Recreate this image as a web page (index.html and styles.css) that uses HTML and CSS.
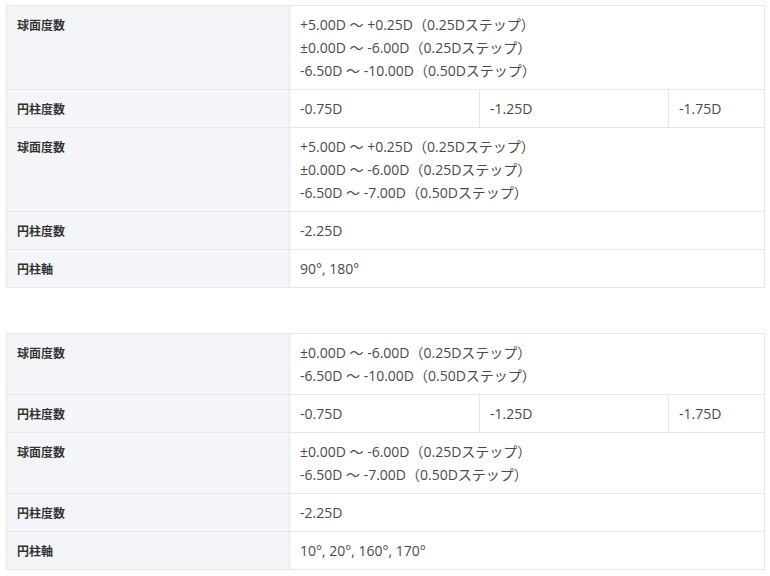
FILE: index.html
```html
<!DOCTYPE html>
<html lang="ja">
<head>
<meta charset="utf-8">
<link rel="stylesheet" href="styles.css">
</head>
<body>
<div class="page">
  <table class="spec">
    <colgroup><col class="c-head"><col class="c-a"><col class="c-b"><col class="c-c"></colgroup>
    <tr><th>球面度数</th><td colspan="3">+5.00D 〜 +0.25D（0.25Dステップ）<br>±0.00D 〜 -6.00D（0.25Dステップ）<br>-6.50D 〜 -10.00D（0.50Dステップ）</td></tr>
    <tr><th>円柱度数</th><td>-0.75D</td><td>-1.25D</td><td>-1.75D</td></tr>
    <tr><th>球面度数</th><td colspan="3">+5.00D 〜 +0.25D（0.25Dステップ）<br>±0.00D 〜 -6.00D（0.25Dステップ）<br>-6.50D 〜 -7.00D（0.50Dステップ）</td></tr>
    <tr><th>円柱度数</th><td colspan="3">-2.25D</td></tr>
    <tr><th>円柱軸</th><td colspan="3">90°, 180°</td></tr>
  </table>
  <table class="spec">
    <colgroup><col class="c-head"><col class="c-a"><col class="c-b"><col class="c-c"></colgroup>
    <tr><th>球面度数</th><td colspan="3">±0.00D 〜 -6.00D（0.25Dステップ）<br>-6.50D 〜 -10.00D（0.50Dステップ）</td></tr>
    <tr><th>円柱度数</th><td>-0.75D</td><td>-1.25D</td><td>-1.75D</td></tr>
    <tr><th>球面度数</th><td colspan="3">±0.00D 〜 -6.00D（0.25Dステップ）<br>-6.50D 〜 -7.00D（0.50Dステップ）</td></tr>
    <tr><th>円柱度数</th><td colspan="3">-2.25D</td></tr>
    <tr><th>円柱軸</th><td colspan="3">10°, 20°, 160°, 170°</td></tr>
  </table>
</div>
</body>
</html>
```
FILE: styles.css
```css
html, body {
  margin: 0;
  padding: 0;
  background: #ffffff;
}
.page {
  padding: 5px 6px 0 6px;
  display: flex;
  flex-direction: column;
  gap: 45px;
}
.spec {
  width: 758px;
  border-collapse: collapse;
  table-layout: fixed;
  font-family: "Open Sans", "Noto Sans CJK JP", sans-serif;
}
.c-head { width: 283px; }
.c-a { width: 190px; }
.c-b { width: 189px; }
.c-c { width: 96px; }
.spec th, .spec td {
  border: 1px solid #e6e6e6;
  padding: 7px 10px;
  line-height: 23px;
  vertical-align: top;
  text-align: left;
}
.spec th {
  background: #f3f5f9;
  font-family: "Noto Sans CJK JP", sans-serif;
  font-size: 12px;
  font-weight: bold;
  color: #333333;
}
.spec td {
  font-size: 14px;
  color: #4a4a4a;
  background: #ffffff;
}
```
